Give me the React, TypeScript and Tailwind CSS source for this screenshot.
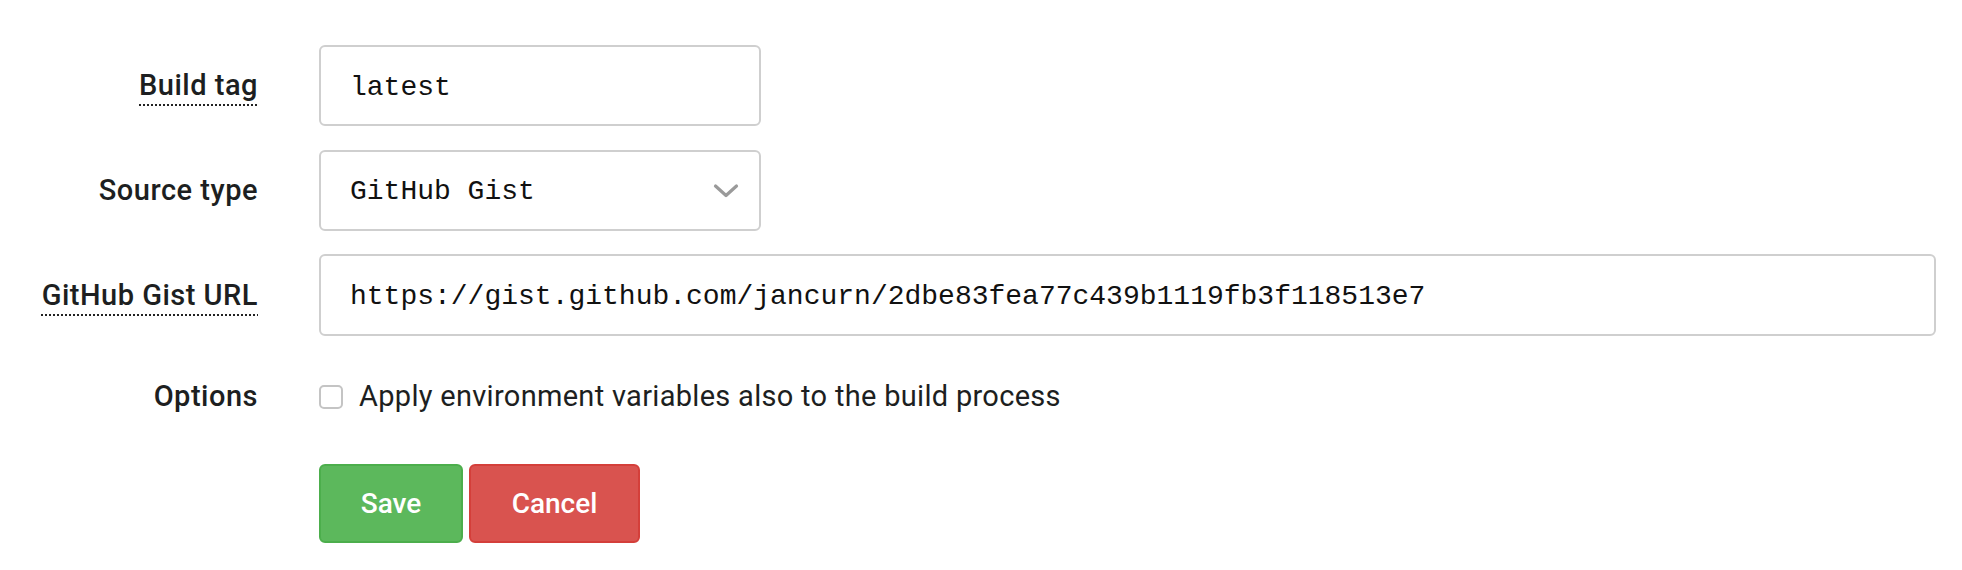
import { useState } from 'react';

const labelCls =
  "text-right text-[29px] font-medium text-[#1d1f21] tracking-[0.5px] leading-none";
const fieldCls =
  "h-[81px] w-full rounded-[6px] border-2 border-[#cfcfcf] bg-white px-[29px] pt-[3px] text-[28px] text-[#111] outline-none font-['Liberation_Mono',monospace]";

function Hint({ children }: { children: React.ReactNode }) {
  return (
    <span className="underline decoration-dotted decoration-2 underline-offset-[9px] decoration-[#222]">
      {children}
    </span>
  );
}

export default function App() {
  const [tag, setTag] = useState('latest');
  const [source, setSource] = useState('gist');
  const [url, setUrl] = useState('https://gist.github.com/jancurn/2dbe83fea77c439b1119fb3f118513e7');
  const [applyEnv, setApplyEnv] = useState(false);

  return (
    <div className="min-h-[570px] w-full bg-white font-['Roboto',sans-serif] pt-[45px] pr-[26px]">
      <form
        className="grid grid-cols-[258px_1fr] gap-x-[61px] gap-y-[24px] items-center"
        onSubmit={(e) => e.preventDefault()}
      >
        {/* Build tag */}
        <label className={labelCls}>
          <Hint>Build tag</Hint>
        </label>
        <div className="w-[442px]">
          <input className={fieldCls} value={tag} onChange={(e) => setTag(e.target.value)} />
        </div>

        {/* Source type */}
        <label className={labelCls}>Source type</label>
        <div className="relative w-[442px]">
          <select
            className={fieldCls + " appearance-none"}
            value={source}
            onChange={(e) => setSource(e.target.value)}
          >
            <option value="gist">GitHub Gist</option>
            <option value="git">Git repository</option>
            <option value="zip">Zip file</option>
          </select>
          <svg
            className="pointer-events-none absolute right-[22px] top-1/2 -translate-y-1/2"
            width="26"
            height="16"
            viewBox="0 0 26 16"
            fill="none"
          >
            <path d="M2.5 3 L13 12.5 L23.5 3" stroke="#9a9a9a" strokeWidth="3.2" strokeLinecap="round" strokeLinejoin="round" />
          </svg>
        </div>

        {/* Gist URL */}
        <label className={labelCls}>
          <Hint>GitHub Gist URL</Hint>
        </label>
        <div className="-mt-px">
          <input className={fieldCls + " h-[82px]"} value={url} onChange={(e) => setUrl(e.target.value)} />
        </div>

        {/* Options */}
        <label className={labelCls + " mt-[22px]"}>Options</label>
        <label className="mt-[22px] flex items-center gap-[16px] cursor-pointer">
          <span
            className={
              "h-[24px] w-[24px] shrink-0 rounded-[5px] border-2 border-[#c4c4c4] bg-white " +
              (applyEnv ? "bg-[#337ab7] border-[#337ab7]" : "")
            }
            onClick={() => setApplyEnv(!applyEnv)}
          />
          <span className="text-[29px] text-[#1d1f21] tracking-[0.3px] leading-none">
            Apply environment variables also to the build process
          </span>
        </label>

        {/* Actions */}
        <div />
        <div className="mt-[29px] flex gap-[6px]">
          <button
            type="submit"
            className="h-[79px] w-[144px] rounded-[6px] border-2 border-[#4cae4c] bg-[#5cb85c] text-[28px] font-medium text-white"
          >
            Save
          </button>
          <button
            type="button"
            className="h-[79px] w-[171px] rounded-[6px] border-2 border-[#d43f3a] bg-[#d9534f] text-[28px] font-medium text-white"
          >
            Cancel
          </button>
        </div>
      </form>
    </div>
  );
}
